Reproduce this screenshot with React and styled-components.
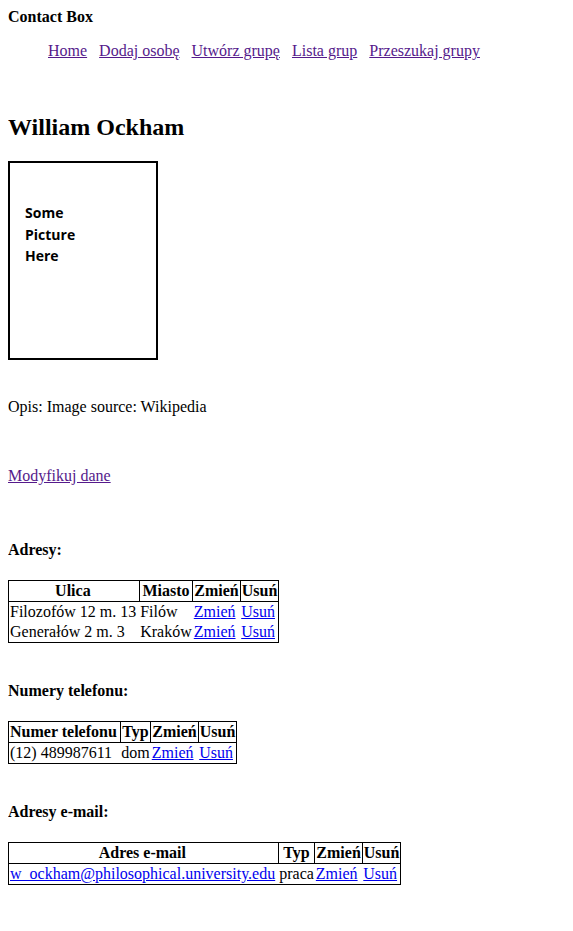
import styled, { createGlobalStyle } from "styled-components";

const GlobalStyle = createGlobalStyle`
  body {
    margin: 8px;
    font-family: "Liberation Serif", "Times New Roman", serif;
    font-size: 16px;
    color: #000;
    background: #fff;
  }
`;

const Brand = styled.div`
  font-weight: bold;
  line-height: 18px;
`;

const Nav = styled.ul`
  margin: 16px 0 0;
  padding-left: 40px;
  list-style: none;
  display: flex;
  gap: 12px;
  line-height: 18px;
`;

const Link = styled.a`
  color: ${(p) => (p.$visited ? "#551a8b" : "#0000ee")};
  text-decoration: underline;
  cursor: pointer;
`;

const Name = styled.h2`
  margin: 53px 0 20px;
  font-size: 24px;
  line-height: 28px;
`;

const Picture = styled.div`
  width: 146px;
  height: 195px;
  border: 2px solid #000;
  font-family: "Open Sans", "Liberation Sans", sans-serif;
  font-weight: 700;
  font-size: 14px;
  line-height: 21.5px;
`;

const PictureText = styled.div`
  margin: 39px 0 0 15px;
`;

const Paragraph = styled.p`
  margin: ${(p) => p.$top}px 0 0;
  line-height: 18px;
`;

const SectionTitle = styled.h4`
  margin: ${(p) => p.$top}px 0 21px;
  font-size: 16px;
  line-height: 18px;
`;

const Table = styled.table`
  border-collapse: collapse;
  border: 1px solid #000;
  line-height: 18px;

  th:first-child,
  td:first-child {
    padding-right: 3px;
  }
`;

const Th = styled.th`
  border: 1px solid #000;
  padding: 1px;
  font-weight: bold;
`;

const Td = styled.td`
  padding: 1px;
  text-align: left;
`;

const Row = ({ cells }) => (
  <tr>
    {cells.map((c, i) => (
      <Td key={i}>{c}</Td>
    ))}
    <Td>
      <Link>Zmień</Link>
    </Td>
    <Td>
      <Link>Usuń</Link>
    </Td>
  </tr>
);

const DataTable = ({ heads, rows }) => (
  <Table>
    <thead>
      <tr>
        {heads.map((h) => (
          <Th key={h}>{h}</Th>
        ))}
        <Th>Zmień</Th>
        <Th>Usuń</Th>
      </tr>
    </thead>
    <tbody>
      {rows.map((r, i) => (
        <Row key={i} cells={r} />
      ))}
    </tbody>
  </Table>
);

const navItems = ["Home", "Dodaj osobę", "Utwórz grupę", "Lista grup", "Przeszukaj grupy"];

export default function App() {
  return (
    <>
      <GlobalStyle />
      <Brand>Contact Box</Brand>
      <Nav>
        {navItems.map((n) => (
          <li key={n}>
            <Link $visited>{n}</Link>
          </li>
        ))}
      </Nav>
      <Name>William Ockham</Name>
      <Picture>
        <PictureText>
          Some
          <br />
          Picture
          <br />
          Here
        </PictureText>
      </Picture>
      <Paragraph $top={38}>Opis: Image source: Wikipedia</Paragraph>
      <Paragraph $top={51}>
        <Link $visited>Modyfikuj dane</Link>
      </Paragraph>

      <SectionTitle $top={56}>Adresy:</SectionTitle>
      <DataTable
        heads={["Ulica", "Miasto"]}
        rows={[
          ["Filozofów 12 m. 13", "Filów"],
          ["Generałów 2 m. 3", "Kraków"],
        ]}
      />

      <SectionTitle $top={39}>Numery telefonu:</SectionTitle>
      <DataTable heads={["Numer telefonu", "Typ"]} rows={[["(12) 489987611", "dom"]]} />

      <SectionTitle $top={39}>Adresy e-mail:</SectionTitle>
      <DataTable
        heads={["Adres e-mail", "Typ"]}
        rows={[[<Link>w_ockham@philosophical.university.edu</Link>, "praca"]]}
      />
    </>
  );
}
